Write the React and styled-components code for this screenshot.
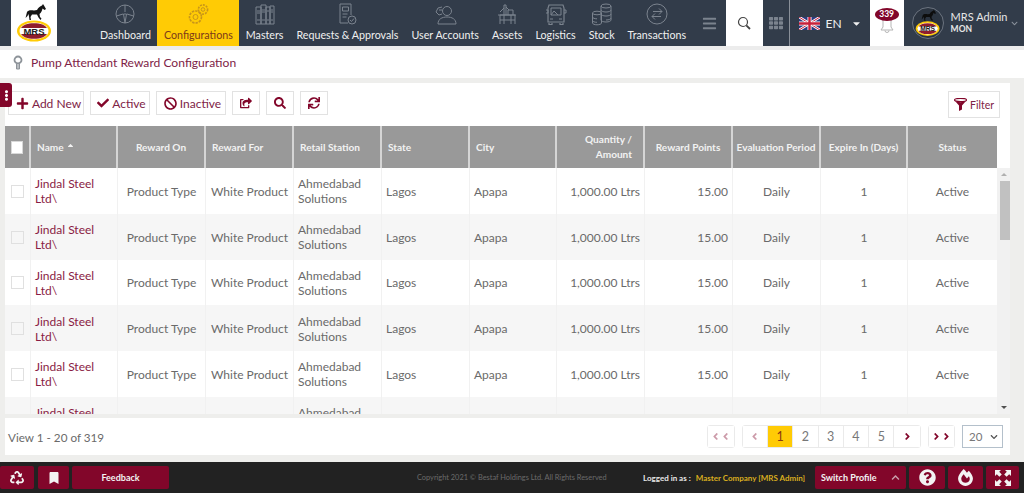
import React from 'react';
import styled, { createGlobalStyle } from 'styled-components';
import {
  FaPlus, FaCheck, FaBan, FaShareSquare, FaSearch, FaSync, FaRecycle, FaBookmark,
  FaQuestionCircle, FaFireAlt, FaCaretDown, FaBars, FaTh, FaEllipsisV,
  FaChevronDown, FaChevronUp, FaSortUp, FaAngleLeft, FaAngleRight,
} from 'react-icons/fa';

const GlobalStyle = createGlobalStyle`
  html, body { margin: 0; padding: 0; }
  body {
    width: 1024px;
    height: 493px;
    overflow: hidden;
    background: #eeeeec;
    font-family: Lato, "Open Sans", sans-serif;
  }
  * { box-sizing: border-box; }
`;

const CRIMSON = '#82062a';
const TEXT = '#6a6a6a';
const ICON = '#7b838e';
const COLUMNS = '26px 87px 88px 88px 88px 88px 87px 88px 88px 88px 87px 89px';

const Page = styled.div`
  width: 1024px;
  height: 493px;
  display: flex;
  flex-direction: column;
`;

const Header = styled.header`
  height: 46px;
  flex: none;
  display: flex;
  background: #323c4a;
  padding-left: 11px;
`;

const LogoBox = styled.div`
  width: 46px;
  background: #fff;
  display: flex;
  align-items: center;
  justify-content: center;
  margin-right: 36.5px;
`;

const Nav = styled.nav`
  display: flex;
`;

const NavItem = styled.div`
  display: flex;
  flex-direction: column;
  align-items: center;
  justify-content: flex-end;
  padding: 0 6.5px 4px;
  gap: 2px;
  font-size: 10.7px;
  line-height: 14px;
  white-space: nowrap;
  color: ${p => (p.$active ? '#7c3a1a' : '#f0f0f0')};
  background: ${p => (p.$active ? '#ffcb05' : 'transparent')};
  svg { display: block; }
`;

const NavGlyph = styled.span`
  color: ${p => (p.$active ? '#c8951a' : ICON)};
`;

const MenuToggle = styled.div`
  width: 33px;
  flex: none;
  display: flex;
  align-items: center;
  justify-content: center;
  color: ${ICON};
  font-size: 15px;
`;

const SearchBox = styled.div`
  width: 37px;
  flex: none;
  background: #fff;
  display: flex;
  align-items: center;
  justify-content: center;
`;

const GridBox = styled.div`
  width: 27px;
  flex: none;
  display: flex;
  align-items: center;
  justify-content: center;
  color: ${ICON};
  font-size: 14px;
  border-right: 1px solid #8a9099;
`;

const LangBox = styled.div`
  width: 80px;
  flex: none;
  display: flex;
  align-items: center;
  padding-left: 9px;
  gap: 6px;
  color: #f0f0f0;
  font-size: 12px;
  svg:last-child { margin-left: 3px; }
`;

const BellBox = styled.div`
  position: relative;
  width: 34px;
  flex: none;
  background: #fff;
  display: flex;
  justify-content: center;
  align-items: flex-end;
  padding-bottom: 13px;
`;

const BellBadge = styled.span`
  position: absolute;
  top: 8px;
  left: 5px;
  width: 24px;
  height: 13px;
  border-radius: 50%;
  background: #82062a;
  color: #fff;
  font-size: 8.5px;
  font-weight: 700;
  line-height: 13px;
  text-align: center;
`;

const UserBox = styled.div`
  flex: 1;
  display: flex;
  align-items: center;
  padding-left: 8px;
  gap: 7px;
  color: #e6e6e6;
`;

const Avatar = styled.div`
  width: 32px;
  height: 32px;
  flex: none;
  border-radius: 50%;
  border: 1px solid #6c7480;
  background: #2b3440;
  display: flex;
  align-items: center;
  justify-content: center;
`;

const UserText = styled.div`
  display: flex;
  flex-direction: column;
  font-size: 11px;
  line-height: 13px;
  white-space: nowrap;
  strong { font-size: 8.5px; font-weight: 700; }
`;

const UserCaret = styled.span`
  color: #8a919b;
  font-size: 7px;
  margin-left: -3px;
  margin-top: 2px;
`;

const Breadcrumb = styled.div`
  height: 32px;
  flex: none;
  margin-bottom: 5px;
  background: #fff;
  border-top: 4px solid #ececec;
  display: flex;
  align-items: center;
  gap: 8px;
  padding: 0 0 3px 13px;
  color: #7e2346;
  font-size: 12.1px;
`;

const Panel = styled.main`
  position: relative;
  width: 1005px;
  margin-left: 5px;
  height: 372px;
  flex: none;
  background: #fff;
  display: flex;
  flex-direction: column;
`;

const SideTab = styled.div`
  position: absolute;
  left: -5px;
  top: 0;
  width: 12px;
  height: 24px;
  background: ${CRIMSON};
  border-radius: 0 3px 3px 0;
  color: #fff;
  font-size: 11px;
  display: flex;
  align-items: center;
  justify-content: center;
  z-index: 2;
`;

const Toolbar = styled.div`
  height: 43px;
  flex: none;
  display: flex;
  align-items: flex-start;
  padding: 8px 10px 0 3px;
  gap: 6px;
`;

const ToolButton = styled.button`
  height: 24px;
  width: ${p => p.$w || 28}px;
  padding: 0 0 0 ${p => p.$shift || 0}px;
  display: flex;
  align-items: center;
  justify-content: center;
  gap: 3px;
  background: #fff;
  border: 1px solid #e2e2e2;
  font-family: inherit;
  font-size: 12px;
  color: #7e2346;
  svg { color: ${CRIMSON}; }
`;

const FilterButton = styled(ToolButton)`
  margin-left: auto;
  height: 27px;
  width: 52px;
  font-size: 10.5px;
`;

const TableArea = styled.div`
  display: flex;
  height: 288px;
  flex: none;
  overflow: hidden;
`;

const Table = styled.div`
  width: 992px;
  flex: none;
  display: flex;
  flex-direction: column;
`;

const HeadRow = styled.div`
  height: 42px;
  flex: none;
  display: grid;
  grid-template-columns: ${COLUMNS};
`;

const HeadCell = styled.div`
  background: #999;
  border-right: 2px solid #d5d5d5;
  color: #f2f2f2;
  font-size: 10.1px;
  font-weight: 700;
  line-height: 15px;
  display: flex;
  align-items: center;
  padding: 0 ${p => (p.$align === 'center' ? 0 : 6)}px;
  white-space: nowrap;
  justify-content: ${p => p.$align || 'flex-start'};
  text-align: ${p => (p.$align === 'flex-end' ? 'right' : 'left')};
  &:last-child { border-right: none; }
  svg { margin-left: 2px; font-size: 9px; }
`;

const HeadStack = styled.span`
  padding-right: 5px;
`;

const Body = styled.div`
  flex: 1;
  overflow: hidden;
`;

const Row = styled.div`
  height: 45.75px;
  display: grid;
  grid-template-columns: ${COLUMNS};
  background: ${p => (p.$even ? '#f6f6f6' : '#fff')};
`;

const Cell = styled.div`
  border-right: 1px solid #f1f1f1;
  color: ${TEXT};
  font-size: 12px;
  line-height: 15px;
  display: flex;
  align-items: center;
  padding: 1px 4px 0;
  justify-content: ${p => p.$align || 'flex-start'};
  text-align: left;
  &:last-child { border-right: none; }
`;

const NameCell = styled(Cell)`
  color: #8a1c44;
`;

const QtyCell = styled(Cell)`
  white-space: nowrap;
`;

const Check = styled.span`
  width: 13px;
  height: 13px;
  display: block;
  margin-left: ${p => (p.$head ? 0 : 2)}px;
  background: ${p => (p.$head ? '#fff' : 'transparent')};
  border: 1px solid ${p => (p.$head ? '#d8d8d8' : '#e0e0e0')};
`;

const ScrollTrack = styled.div`
  flex: 1;
  margin-top: 42px;
  background: #f1f1f1;
  position: relative;
  display: flex;
  flex-direction: column;
  align-items: center;
  justify-content: space-between;
  padding: 5px 0;
`;

const ScrollArrow = styled.span`
  width: 0;
  height: 0;
  border-left: 3px solid transparent;
  border-right: 3px solid transparent;
  ${p => (p.$up
    ? 'border-bottom: 3px solid #b0b0b0;'
    : 'border-top: 3px solid #505050;')}
`;

const ScrollThumb = styled.div`
  position: absolute;
  top: 13px;
  left: 3px;
  right: 0;
  height: 59px;
  background: #c1c1c1;
`;

const Pager = styled.div`
  flex: 1;
  border-top: 4px solid #eeeeec;
  display: flex;
  align-items: center;
  padding: 0 7px 0 3px;
  color: ${TEXT};
  font-size: 11.7px;
`;

const PagerInfo = styled.div`
  margin-right: auto;
`;

const PageGroup = styled.div`
  display: flex;
  margin-right: 7px;
  border: 1px solid #eaeaea;
  border-radius: 3px;
  height: 23px;
`;

const PageCell = styled.div`
  width: 25.3px;
  display: flex;
  align-items: center;
  justify-content: center;
  font-size: 12.5px;
  border-right: 1px solid #eaeaea;
  &:last-child { border-right: none; }
  background: ${p => (p.$active ? '#ffcb05' : '#fff')};
  color: ${p => (p.$active ? '#8a3a12' : p.$arrow ? CRIMSON : '#777')};
  svg { opacity: ${p => (p.$dim ? 0.4 : 1)}; font-size: 11px; margin: 0 -0.5px; }
`;

const PageSelect = styled.div`
  width: 41px;
  height: 23px;
  border: 1px solid #b4c0cb;
  display: flex;
  align-items: center;
  justify-content: space-between;
  padding: 0 4px 0 6px;
  font-size: 11.5px;
  color: #777;
  svg { color: #555; font-size: 8px; }
`;

const Footer = styled.footer`
  margin-top: auto;
  height: 31px;
  flex: none;
  background: #222;
  display: flex;
  align-items: center;
  padding: 0 4px 0 0;
`;

const FootButton = styled.div`
  width: ${p => p.$w}px;
  height: 23px;
  flex: none;
  margin-right: ${p => p.$gap ?? 3}px;
  background: ${CRIMSON};
  color: #f3f3f3;
  border-radius: 2px;
  display: flex;
  align-items: center;
  justify-content: center;
  font-size: ${p => p.$size || 14}px;
  font-weight: ${p => (p.$bold ? 700 : 400)};
`;

const SwitchButton = styled(FootButton)`
  justify-content: space-between;
  padding: 0 6px;
  svg { font-size: 9px; color: #c9a0ac; }
`;

const Copyright = styled.div`
  margin-left: 248px;
  width: 226px;
  font-size: 7.4px;
  color: #6b6b6b;
  white-space: nowrap;
`;

const LoggedIn = styled.div`
  width: 172px;
  font-size: 8px;
  font-weight: 700;
  color: #e8e8e8;
  white-space: nowrap;
  span { color: #d9ae1f; margin-left: 5px; }
`;

function NavIcon({ children }) {
  return (
    <svg width="24" height="24" viewBox="0 0 24 24" fill="none" stroke="currentColor" strokeWidth="1">
      {children}
    </svg>
  );
}

const navItems = [
  {
    label: 'Dashboard',
    icon: <><circle cx="12" cy="12" r="9" /><path d="M12 3v7M3.500 14l6.500-2M20.500 14l-6.500-2M12 21l-1.500-9h3z" /></>,
  },
  {
    label: 'Configurations',
    active: true,
    icon: (
      <>
        <circle cx="9.500" cy="15" r="6" strokeDasharray="2.400 1" strokeWidth="1.600" />
        <circle cx="9.500" cy="15" r="2.500" />
        <circle cx="17" cy="7.500" r="4.600" strokeDasharray="2 1" strokeWidth="1.600" />
        <circle cx="17" cy="7.500" r="1.800" />
      </>
    ),
  },
  {
    label: 'Masters',
    icon: (
      <>
        <path d="M3 5h5v17H3zM8 3h5v19H8zM13 5h4v17h-4zM17 4h4v18h-4z" />
        <path d="M4 9h3M4 11h3M9 8h3M9 10h3M14 9h2M18 8h2M18 10h2M4 18h3M9 18h3M14 18h2M18 18h2" />
      </>
    ),
  },
  {
    label: 'Requests & Approvals',
    icon: (
      <>
        <path d="M16 13V2H5v19h8" />
        <path d="M7.500 5h6v4h-6zM7.500 12h5M7.500 15h4" />
        <circle cx="17" cy="18" r="4" />
        <path d="M15 18l1.500 1.500 2.500-3" />
      </>
    ),
  },
  {
    label: 'User Accounts',
    icon: (
      <>
        <circle cx="14" cy="9" r="4.500" />
        <path d="M5 22c0-5 4-7 9-7s9 2 9 7z" />
        <path d="M9 5L5 6 3 10l3 3 3-1M6 8h3" />
      </>
    ),
  },
  {
    label: 'Assets',
    icon: (
      <>
        <path d="M5 22V13h15v9M9 22V13M16 22V13M3 13h18M9 13V3h2v10M13 13V8h5v5M5 18h15" />
        <path d="M9 6l-4 4M11 5l3 3" />
      </>
    ),
  },
  {
    label: 'Logistics',
    icon: (
      <>
        <path d="M5 3h14l1 3v14H4V6zM5 21v1.500h3V21M16 21v1.500h3V21" strokeWidth="1.200" />
        <path d="M7 6h10v7H7zM7 13l3-4 4 4M2 8h2v3H2M20 8h2v3h-2" />
        <path d="M6 17h3M15 17h3" />
      </>
    ),
  },
  {
    label: 'Stock',
    icon: (
      <>
        <ellipse cx="16" cy="4" rx="5" ry="2" />
        <path d="M11 4v14c0 1 2 2 5 2s5-1 5-2V4M11 8c0 1 2 2 5 2s5-1 5-2M11 12c0 1 2 2 5 2s5-1 5-2M21 16c0 1-2 2-5 2" />
        <ellipse cx="7" cy="11" rx="4.500" ry="1.800" />
        <path d="M2.500 11v10c0 1 2 1.800 4.500 1.800s4.500-.8 4.500-1.800V11M2.500 15c0 1 2 1.800 4.500 1.800M2.500 18.500c0 1 2 1.800 4.500 1.800" />
      </>
    ),
  },
  {
    label: 'Transactions',
    icon: (
      <>
        <circle cx="12" cy="12" r="10" />
        <path d="M8 9.500h9M14 6.500l3 3-3 3M16 14.500H7M10 11.500l-3 3 3 3" />
      </>
    ),
  },
];

function Logo({ small }) {
  const scale = small ? 0.7 : 1;
  return (
    <svg width={36 * scale} height={40 * scale} viewBox="0 0 36 40">
      <path
        fill={small ? '#0d0d0d' : '#151515'}
        d="M11 9C12 7 15 7 18 7.500L21 7C22 5 24 3 26 2.500L27 1 28 2.500 30 6 28.500 7 26.500 5.500C26 8 25 10 23.500 11L24 14 25.500 15.500 24.500 17 22.500 14.500 21 11.500H16L14.500 14 15 17H13.500L13 13.500 12.500 11 11.500 13 9.500 15 11 9z"
      />
      <ellipse cx="18" cy="28" rx="17" ry="10.500" fill="#ffcb05" />
      <ellipse cx="18" cy="28" rx="14.500" ry="8.400" fill="#fff" />
      <path d="M5 25c2-3 6-4.800 13-4.800S29 22 31 25zM5 31c2 3 6 4.800 13 4.800S29 34 31 31z" fill="#8f1d2c" />
      <text x="18" y="31.500" textAnchor="middle" fontSize="9.500" fontWeight="900" fontFamily="Liberation Sans, sans-serif" fill="#222">MRS</text>
    </svg>
  );
}

function Flag() {
  return (
    <svg width="21" height="13" viewBox="0 0 21 13">
      <rect width="21" height="13" fill="#2b3a80" />
      <path d="M0 0l21 13M21 0L0 13" stroke="#fff" strokeWidth="2.600" />
      <path d="M0 0l21 13M21 0L0 13" stroke="#c8203a" strokeWidth="1" />
      <path d="M10.500 0v13M0 6.500h21" stroke="#fff" strokeWidth="4" />
      <path d="M10.500 0v13M0 6.500h21" stroke="#c8203a" strokeWidth="2.400" />
    </svg>
  );
}

function Magnifier() {
  return (
    <svg width="14" height="14" viewBox="0 0 14 14" fill="none" stroke="#444" strokeWidth="1.200">
      <circle cx="6" cy="6" r="4.500" />
      <path d="M9.300 9.300L13 13" strokeWidth="1.800" />
    </svg>
  );
}

function Bell() {
  return (
    <svg width="14" height="16" viewBox="0 0 14 16" fill="none" stroke="#b5b5b5" strokeWidth="1">
      <path d="M3 2v8l-2 3h12l-2-3V2M5 13.500a2 2 0 0 0 4 0" />
    </svg>
  );
}

function Funnel() {
  return (
    <svg width="13" height="13" viewBox="0 0 13 13">
      <ellipse cx="6.500" cy="2" rx="6" ry="1.700" fill="none" stroke="#82062a" strokeWidth="1.200" />
      <path d="M1 3l4 4.500V13l3-1.500v-4L12 3C9 4.500 4 4.500 1 3z" fill="#82062a" />
    </svg>
  );
}

function ExpandCorners() {
  return (
    <svg width="16" height="16" viewBox="0 0 16 16" fill="#f3f3f3">
      <path d="M0 0h6L4.200 1.800 6.800 4.400 4.400 6.800 1.800 4.200 0 6zM16 0v6l-1.800-1.800-2.600 2.600-2.400-2.400 2.600-2.600L10 0zM0 16v-6l1.800 1.800 2.600-2.600 2.400 2.400-2.600 2.600L6 16zM16 16h-6l1.800-1.800-2.600-2.600 2.400-2.400 2.600 2.600L16 10z" />
    </svg>
  );
}

const rows = Array.from({ length: 6 }, (_, i) => i);

function App() {
  return (
    <Page>
      <GlobalStyle />
      <Header>
        <LogoBox>
          <Logo />
        </LogoBox>
        <Nav>
          {navItems.map(item => (
            <NavItem key={item.label} $active={item.active}>
              <NavGlyph $active={item.active}>
                <NavIcon>{item.icon}</NavIcon>
              </NavGlyph>
              {item.label}
            </NavItem>
          ))}
        </Nav>
        <MenuToggle><FaBars /></MenuToggle>
        <SearchBox><Magnifier /></SearchBox>
        <GridBox><FaTh /></GridBox>
        <LangBox>
          <Flag />
          EN
          <FaCaretDown size={11} />
        </LangBox>
        <BellBox>
          <Bell />
          <BellBadge>339</BellBadge>
        </BellBox>
        <UserBox>
          <Avatar><Logo small /></Avatar>
          <UserText>
            MRS Admin
            <strong>MON</strong>
          </UserText>
          <UserCaret><FaChevronDown /></UserCaret>
        </UserBox>
      </Header>

      <Breadcrumb>
        <svg width="10" height="15" viewBox="0 0 10 15" fill="none" stroke="#8d9399" strokeWidth="1.800">
          <circle cx="5" cy="5" r="3.500" />
          <path d="M3.500 9v5h3V9" fill="#b8bcc0" strokeWidth="1" />
        </svg>
        Pump Attendant Reward Configuration
      </Breadcrumb>

      <Panel>
        <SideTab><FaEllipsisV /></SideTab>
        <Toolbar>
          <ToolButton $w={76} $shift={5}><FaPlus size={13} />Add New</ToolButton>
          <ToolButton $w={60} $shift={3}><FaCheck size={12} />Active</ToolButton>
          <ToolButton $w={70} $shift={3}><FaBan size={13} />Inactive</ToolButton>
          <ToolButton><FaShareSquare size={12} /></ToolButton>
          <ToolButton><FaSearch size={12} /></ToolButton>
          <ToolButton><FaSync size={12} /></ToolButton>
          <FilterButton><Funnel />Filter</FilterButton>
        </Toolbar>

        <TableArea>
          <Table>
            <HeadRow>
              <HeadCell><Check $head /></HeadCell>
              <HeadCell>Name<FaSortUp /></HeadCell>
              <HeadCell $align="center">Reward On</HeadCell>
              <HeadCell>Reward For</HeadCell>
              <HeadCell>Retail Station</HeadCell>
              <HeadCell>State</HeadCell>
              <HeadCell>City</HeadCell>
              <HeadCell $align="flex-end">
                <HeadStack>Quantity /<br />Amount</HeadStack>
              </HeadCell>
              <HeadCell $align="center">Reward Points</HeadCell>
              <HeadCell $align="center">Evaluation Period</HeadCell>
              <HeadCell $align="center">Expire In (Days)</HeadCell>
              <HeadCell $align="center">Status</HeadCell>
            </HeadRow>
            <Body>
              {rows.map(i => (
                <Row key={i} $even={i % 2 === 1}>
                  <Cell><Check /></Cell>
                  <NameCell>Jindal Steel Ltd\</NameCell>
                  <Cell $align="center">Product Type</Cell>
                  <Cell $align="center">White Product</Cell>
                  <Cell>Ahmedabad Solutions</Cell>
                  <Cell>Lagos</Cell>
                  <Cell>Apapa</Cell>
                  <QtyCell $align="flex-end">1,000.00 Ltrs</QtyCell>
                  <Cell $align="flex-end">15.00</Cell>
                  <Cell $align="center">Daily</Cell>
                  <Cell $align="center">1</Cell>
                  <Cell $align="center">Active</Cell>
                </Row>
              ))}
            </Body>
          </Table>
          <ScrollTrack>
            <ScrollArrow $up />
            <ScrollThumb />
            <ScrollArrow />
          </ScrollTrack>
        </TableArea>

        <Pager>
          <PagerInfo>View 1 - 20 of 319</PagerInfo>
          <PageGroup><PageCell $arrow $dim><FaAngleLeft /><FaAngleLeft /></PageCell></PageGroup>
          <PageGroup>
            <PageCell $arrow $dim><FaAngleLeft /></PageCell>
            <PageCell $active>1</PageCell>
            <PageCell>2</PageCell>
            <PageCell>3</PageCell>
            <PageCell>4</PageCell>
            <PageCell>5</PageCell>
            <PageCell $arrow><FaAngleRight /></PageCell>
          </PageGroup>
          <PageGroup><PageCell $arrow><FaAngleRight /><FaAngleRight /></PageCell></PageGroup>
          <PageSelect>20<FaChevronDown /></PageSelect>
        </Pager>
      </Panel>

      <Footer>
        <FootButton $w={34} $gap={4}><FaRecycle /></FootButton>
        <FootButton $w={31} $gap={3} $size={12}><FaBookmark /></FootButton>
        <FootButton $w={97} $gap={0} $size={9} $bold>Feedback</FootButton>
        <Copyright>Copyright 2021 © Bestaf Holdings Ltd. All Rights Reserved</Copyright>
        <LoggedIn>Logged in as :<span>Master Company [MRS Admin]</span></LoggedIn>
        <SwitchButton $w={91} $size={9} $bold>Switch Profile<FaChevronUp /></SwitchButton>
        <FootButton $w={36} $gap={3} $size={17}><FaQuestionCircle /></FootButton>
        <FootButton $w={35} $gap={3} $size={17}><FaFireAlt /></FootButton>
        <FootButton $w={33} $gap={0}><ExpandCorners /></FootButton>
      </Footer>
    </Page>
  );
}

export default App;
